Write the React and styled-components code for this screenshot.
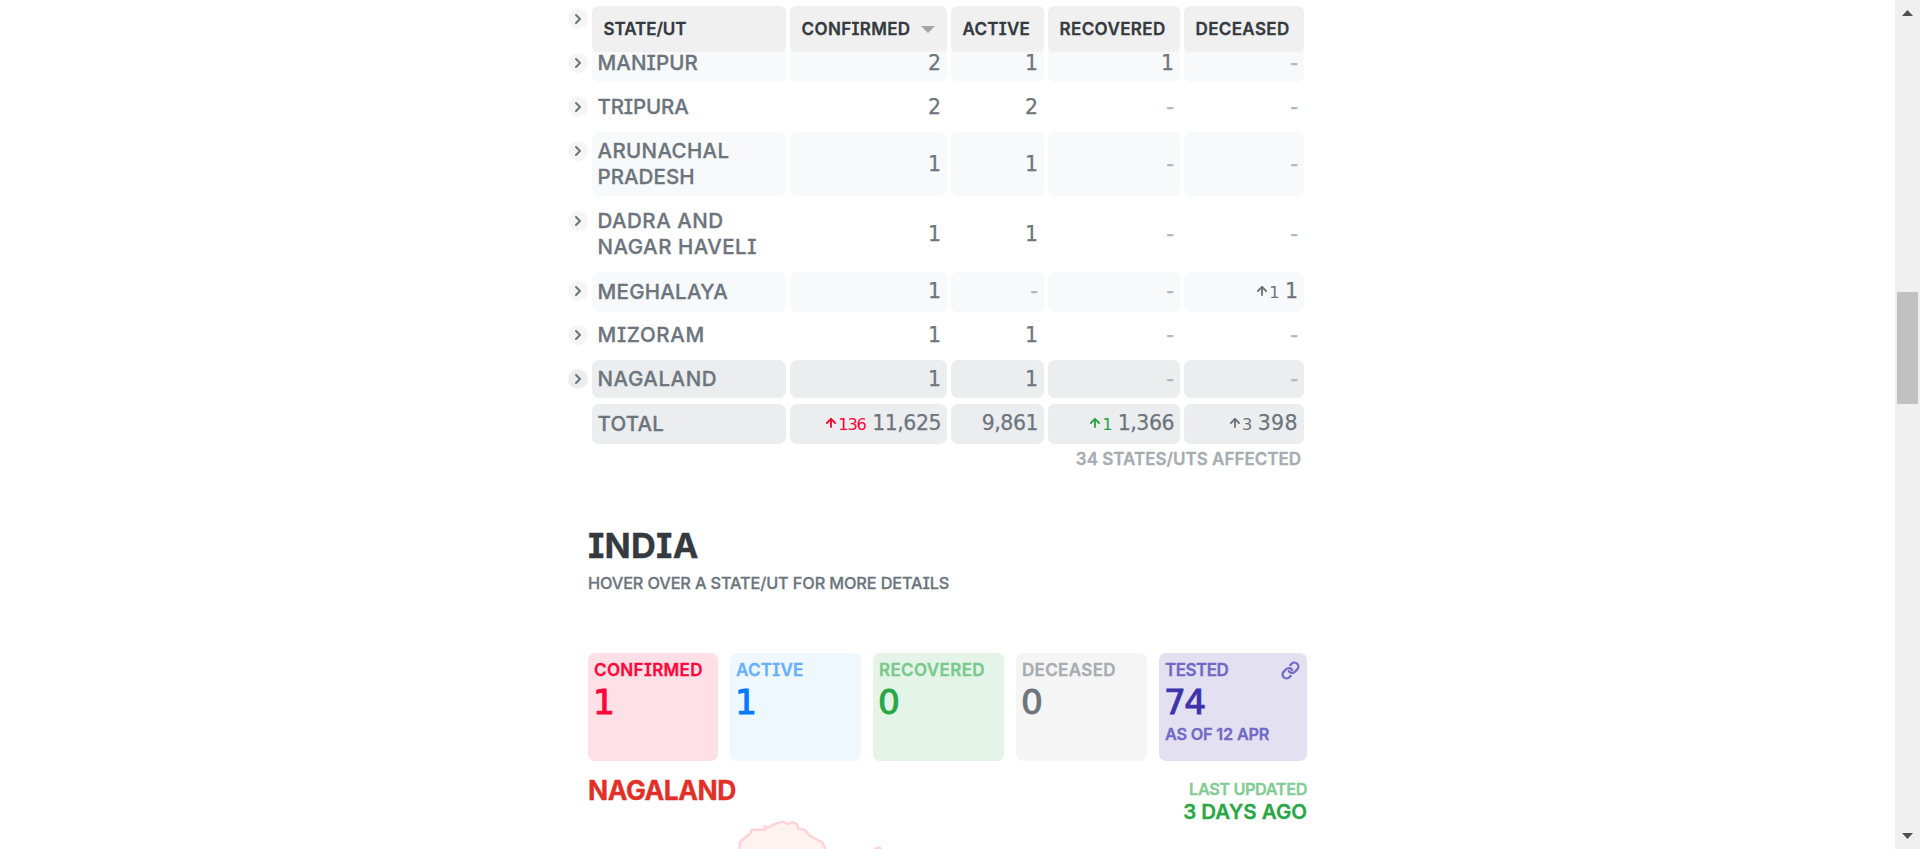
import React from 'react';
import styled, { createGlobalStyle } from 'styled-components';
import { ChevronRight, ArrowUp, Link } from 'lucide-react';

const Global = createGlobalStyle`
  html, body { margin: 0; padding: 0; background: #fff; overflow: hidden; }
  * { box-sizing: border-box; }
`;

const Page = styled.div`
  display: flex;
  height: 849px;
  overflow: hidden;
  font-family: Inter, "Liberation Sans", sans-serif;
  font-feature-settings: "cv08";
  text-transform: uppercase;
  white-space: pre;
  color: #6c757d;
`;

const Content = styled.main`
  flex: 1;
  min-width: 0;
  padding-left: 568px;
`;

const Label = styled.span`
  letter-spacing: ${(p) => p.$ls || 0}px;
  -webkit-text-stroke: 0.3px currentColor;
`;

const Table = styled.section`
  width: 736px;
  padding-top: 6px;
`;

const gridColumns = `
  display: grid;
  grid-template-columns: 20px 194px 157px 93px 132px 120px;
  column-gap: 4px;
`;

const HeaderRow = styled.div`
  ${gridColumns}
  position: relative;
  z-index: 1;
  height: 46px;
`;

const HeaderCell = styled.div`
  display: flex;
  align-items: center;
  justify-content: space-between;
  padding: 0 12px 0 11.6px;
  border-radius: 6px;
  background: #f0f0f0;
  color: #343a40;
  font-size: 17px;
  font-weight: 600;
`;

const SortMark = styled.span`
  border: 7px solid transparent;
  border-top: 7.5px solid #a0a5aa;
  border-bottom: 0;
`;

const Body = styled.div`
  display: flex;
  flex-direction: column;
  gap: 6px;
  margin-top: -52px;
`;

const Row = styled.div`
  ${gridColumns}
  height: ${(p) => (p.$tall ? 64 : 38)}px;
`;

const fills = { plain: 'transparent', stripe: '#f8f9fb', strong: '#ecedef' };

const Toggle = styled.span`
  display: flex;
  align-items: center;
  justify-content: center;
  width: 20px;
  height: 20px;
  margin-top: 8.5px;
  border-radius: 50%;
  background: ${(p) => (p.$tone === 'strong' ? '#ecedef' : '#f5f5f5')};
`;

const NameCell = styled.div`
  display: flex;
  flex-direction: column;
  justify-content: center;
  padding-left: 5.5px;
  border-radius: 7px;
  background: ${(p) => fills[p.$tone]};
  font-size: 20.5px;
  font-weight: 500;
  line-height: 26px;
`;

const NumberCell = styled.div`
  display: flex;
  align-items: baseline;
  justify-content: flex-end;
  padding-right: 6px;
  border-radius: 7px;
  background: ${(p) => fills[p.$tone]};
  color: ${(p) => (p.$empty ? '#b5b8ba' : '#6c757d')};
  font-family: "DejaVu Sans", sans-serif;
  font-size: 20.5px;
  line-height: ${(p) => (p.$tall ? 64 : 38)}px;
`;

const Value = styled.span`
  letter-spacing: ${(p) => p.$ls || 0}px;
  -webkit-text-stroke: ${(p) => (p.$empty ? 0.7 : 0.25)}px currentColor;
`;

const Delta = styled.span`
  display: flex;
  align-items: baseline;
  margin-right: 6.5px;
  color: ${(p) => p.$color};
  font-size: 16.3px;
  letter-spacing: -1.2px;
`;

const FootNote = styled.div`
  padding-right: 3px;
  margin-top: 6px;
  text-align: right;
  color: #a6acb1;
  font-size: 17px;
  font-weight: 600;
  line-height: 22px;
`;

const Overview = styled.section`
  width: 719px;
  margin-left: 20px;
`;

const Title = styled.h1`
  margin: 55px 0 0;
  color: #343a40;
  font-size: 34.4px;
  font-weight: 700;
  line-height: 42px;
`;

const Hint = styled.p`
  margin: 5px 0 0;
  font-size: 16.3px;
  font-weight: 500;
  line-height: 22px;
`;

const Cards = styled.div`
  display: grid;
  grid-template-columns: 130px 131px 131px 131px 148px;
  gap: 12px;
  margin-top: 59px;
`;

const Card = styled.div`
  display: flex;
  flex-direction: column;
  height: 108px;
  padding: 6px 7px 0 6px;
  border-radius: 7px;
  background: ${(p) => p.$bg};
  color: ${(p) => p.$color};
`;

const CardHead = styled.div`
  display: flex;
  align-items: center;
  justify-content: space-between;
  height: 22px;
  color: ${(p) => p.$color};
  font-size: 17px;
  font-weight: 600;
`;

const Count = styled.div`
  margin-left: -1px;
  font-family: "DejaVu Sans", sans-serif;
  font-size: 34.4px;
  line-height: 43px;
  letter-spacing: -1.7px;
  -webkit-text-stroke: 1px currentColor;
`;

const CardNote = styled.div`
  color: ${(p) => p.$color};
  font-size: 16.3px;
  font-weight: 600;
  line-height: 20px;
`;

const RegionRow = styled.div`
  display: flex;
  justify-content: space-between;
  height: 59px;
  padding-top: 17px;
`;

const RegionName = styled.h2`
  margin: 0;
  color: #e23028;
  font-size: 26.5px;
  font-weight: 700;
  line-height: 24px;
`;

const Updated = styled.div`
  display: flex;
  flex-direction: column;
  align-items: flex-end;
  color: #28a745;
  font-size: 20.5px;
  font-weight: 600;
  line-height: 22px;
`;

const UpdatedLabel = styled.div`
  color: #82cb92;
  font-size: 16.3px;
  line-height: 23px;
`;

const MapArt = styled.svg`
  display: block;
`;

const ScrollTrack = styled.aside`
  display: flex;
  flex-direction: column;
  align-items: center;
  width: 25px;
  padding: 10px 0;
  background: #f0f0f0;
`;

const ScrollArrow = styled.svg`
  width: 11px;
  height: 6px;
  fill: #505050;
`;

const Thumb = styled.div`
  width: 21px;
  height: 112px;
  margin: 276px 0 auto;
  background: #c1c1c1;
`;

const states = [
  { name: [['Manipur', 0.11]], tone: 'stripe', cells: ['2', '1', '1', '-'] },
  { name: [['Tripura', -0.15]], tone: 'plain', cells: ['2', '2', '-', '-'] },
  { name: [['Arunachal', 0.36], ['Pradesh', 0.05]], tone: 'stripe', cells: ['1', '1', '-', '-'] },
  { name: [['Dadra and', 0.5], ['Nagar Haveli', 0.5]], tone: 'plain', cells: ['1', '1', '-', '-'] },
  { name: [['Meghalaya', 0.28]], tone: 'stripe', cells: ['1', '-', '-', { delta: '1', color: '#6c757d', value: '1' }] },
  { name: [['Mizoram', 0.67]], tone: 'plain', cells: ['1', '1', '-', '-'] },
  { name: [['Nagaland', 0.58]], tone: 'strong', cells: ['1', '1', '-', '-'] },
  {
    name: [['Total', 0.17]],
    tone: 'strong',
    total: true,
    cells: [
      { delta: '136', color: '#ff073a', value: '11,625' },
      '9,861',
      { delta: '1', color: '#28a745', value: '1,366' },
      { delta: '3', color: '#6c757d', value: '398' },
    ],
  },
];

const cards = [
  { label: 'Confirmed', ls: 0.35, count: '1', bg: '#ffe0e6', color: '#ff073a', soft: '#ff073a' },
  { label: 'Active', ls: 0.26, count: '1', bg: '#eff7ff', color: '#007bff', soft: '#66b0ff' },
  { label: 'Recovered', ls: 0.37, count: '0', bg: '#e4f4e8', color: '#28a745', soft: '#79c98b' },
  { label: 'Deceased', ls: 0.34, count: '0', bg: '#f5f5f5', color: '#6c757d', soft: '#a6acb1' },
  { label: 'Tested', ls: -0.5, count: '74', bg: '#e2e0f1', color: '#3e32ad', soft: '#7269c5', note: 'As of 12 Apr', link: true },
];

function RowToggle({ tone }) {
  return (
    <Toggle $tone={tone}>
      <ChevronRight size={16} strokeWidth={3.1} />
    </Toggle>
  );
}

function Figure({ data, tone, tall }) {
  const item = typeof data === 'string' ? { value: data } : data;
  const empty = item.value === '-';
  const spacing = item.value.includes(',') ? -0.5 : item.value.length > 1 ? 0.4 : 0;
  return (
    <NumberCell $tone={tone} $tall={tall} $empty={empty}>
      {item.delta && (
        <Delta $color={item.color}>
          <ArrowUp size={14} strokeWidth={3.2} />
          {item.delta}
        </Delta>
      )}
      <Value $ls={spacing} $empty={empty}>{item.value}</Value>
    </NumberCell>
  );
}

export default function App() {
  return (
    <Page>
      <Global />
      <Content>
        <Table>
          <HeaderRow>
            <span />
            <HeaderCell><Label $ls={-0.06}>State/UT</Label></HeaderCell>
            <HeaderCell><Label $ls={0.35}>Confirmed</Label><SortMark /></HeaderCell>
            <HeaderCell><Label $ls={0.26}>Active</Label></HeaderCell>
            <HeaderCell><Label $ls={0.37}>Recovered</Label></HeaderCell>
            <HeaderCell><Label $ls={0.34}>Deceased</Label></HeaderCell>
          </HeaderRow>
          <Body>
            <Row><RowToggle tone="plain" /></Row>
            {states.map((s) => {
              const tall = s.name.length > 1;
              return (
                <Row key={s.name[0][0]} $tall={tall}>
                  {s.total ? <span /> : <RowToggle tone={s.tone} />}
                  <NameCell $tone={s.tone}>
                    {s.name.map(([text, ls]) => <Label key={text} $ls={ls}>{text}</Label>)}
                  </NameCell>
                  {s.cells.map((c, i) => <Figure key={i} data={c} tone={s.tone} tall={tall} />)}
                </Row>
              );
            })}
          </Body>
          <FootNote><Label $ls={0}>34 States/UTs affected</Label></FootNote>
        </Table>
        <Overview>
          <Title><Label $ls={0.21}>India</Label></Title>
          <Hint><Label $ls={-0.13}>Hover over a state/UT for more details</Label></Hint>
          <Cards>
            {cards.map((c) => (
              <Card key={c.label} $bg={c.bg} $color={c.color}>
                <CardHead $color={c.soft}>
                  <Label $ls={c.ls}>{c.label}</Label>
                  {c.link && <Link size={19} strokeWidth={2.9} />}
                </CardHead>
                <Count>{c.count}</Count>
                {c.note && <CardNote $color={c.soft}><Label $ls={-0.2}>{c.note}</Label></CardNote>}
              </Card>
            ))}
          </Cards>
          <RegionRow>
            <RegionName><Label $ls={-0.48}>Nagaland</Label></RegionName>
            <Updated>
              <UpdatedLabel><Label $ls={-0.4}>Last updated</Label></UpdatedLabel>
              <Label $ls={0}>3 days ago</Label>
            </Updated>
          </RegionRow>
          <MapArt width="719" height="29" viewBox="0 0 719 29" fill="#fff3ef" stroke="#ffd3d9" strokeWidth="2.4" strokeLinejoin="round">
            <path d="M151 32 L152 21.7 L162.7 13.3 L163.3 9.7 L177 9.7 L176.4 6.3 L179 7.3 L182 6.7 L185 4.7 L193.5 1.9 L196 2 L199 4 L205 2.4 L209 4 L210 8.3 L217 10 L221.5 15.5 L234.5 22.5 L239 32" />
            <path d="M285 31 L288 28 L292 28 L294 32" />
          </MapArt>
        </Overview>
      </Content>
      <ScrollTrack>
        <ScrollArrow viewBox="0 0 11 6"><path d="M5.5 0 L11 6 H0 Z" /></ScrollArrow>
        <Thumb />
        <ScrollArrow viewBox="0 0 11 6"><path d="M0 0 H11 L5.5 6 Z" /></ScrollArrow>
      </ScrollTrack>
    </Page>
  );
}
